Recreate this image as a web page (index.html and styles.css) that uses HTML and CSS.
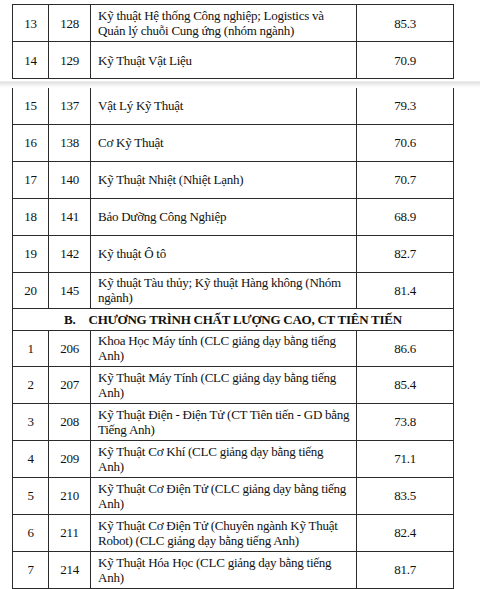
FILE: index.html
```html
<!DOCTYPE html>
<html lang="vi">
<head>
<meta charset="utf-8">
<link rel="stylesheet" href="styles.css">
</head>
<body>
<div class="page">
  <table class="grid first">
    <colgroup><col class="c1"><col class="c2"><col class="c3"><col class="c4"></colgroup>
    <tr><td class="n">13</td><td class="n">128</td><td class="t">Kỹ thuật Hệ thống Công nghiệp; Logistics và Quản lý chuỗi Cung ứng (nhóm ngành)</td><td class="n">85.3</td></tr>
    <tr><td class="n">14</td><td class="n">129</td><td class="t">Kỹ Thuật Vật Liệu</td><td class="n">70.9</td></tr>
  </table>
  <div class="sep"></div>
  <table class="grid second">
    <colgroup><col class="c1"><col class="c2"><col class="c3"><col class="c4"></colgroup>
    <tr class="top"><td class="n">15</td><td class="n">137</td><td class="t">Vật Lý Kỹ Thuật</td><td class="n">79.3</td></tr>
    <tr><td class="n">16</td><td class="n">138</td><td class="t">Cơ Kỹ Thuật</td><td class="n">70.6</td></tr>
    <tr><td class="n">17</td><td class="n">140</td><td class="t">Kỹ Thuật Nhiệt (Nhiệt Lạnh)</td><td class="n">70.7</td></tr>
    <tr><td class="n">18</td><td class="n">141</td><td class="t">Bảo Dưỡng Công Nghiệp</td><td class="n">68.9</td></tr>
    <tr><td class="n">19</td><td class="n">142</td><td class="t">Kỹ thuật Ô tô</td><td class="n">82.7</td></tr>
    <tr class="short"><td class="n">20</td><td class="n">145</td><td class="t">Kỹ thuật Tàu thủy; Kỹ thuật Hàng không (Nhóm ngành)</td><td class="n">81.4</td></tr>
    <tr class="head"><td colspan="4">B.<span class="tab"></span>CHƯƠNG TRÌNH CHẤT LƯỢNG CAO, CT TIÊN TIẾN</td></tr>
    <tr class="short"><td class="n">1</td><td class="n">206</td><td class="t">Khoa Học Máy tính (CLC giảng dạy bằng tiếng Anh)</td><td class="n">86.6</td></tr>
    <tr><td class="n">2</td><td class="n">207</td><td class="t">Kỹ Thuật Máy Tính (CLC giảng dạy bằng tiếng Anh)</td><td class="n">85.4</td></tr>
    <tr><td class="n">3</td><td class="n">208</td><td class="t">Kỹ Thuật Điện - Điện Tử (CT Tiên tiến - GD bằng Tiếng Anh)</td><td class="n">73.8</td></tr>
    <tr><td class="n">4</td><td class="n">209</td><td class="t">Kỹ Thuật Cơ Khí (CLC giảng dạy bằng tiếng<br>Anh)</td><td class="n">71.1</td></tr>
    <tr><td class="n">5</td><td class="n">210</td><td class="t">Kỹ Thuật Cơ Điện Tử (CLC giảng dạy bằng tiếng Anh)</td><td class="n">83.5</td></tr>
    <tr><td class="n">6</td><td class="n">211</td><td class="t">Kỹ Thuật Cơ Điện Tử (Chuyên ngành Kỹ Thuật Robot) (CLC giảng dạy bằng tiếng Anh)</td><td class="n">82.4</td></tr>
    <tr><td class="n">7</td><td class="n">214</td><td class="t">Kỹ Thuật Hóa Học (CLC giảng dạy bằng tiếng Anh)</td><td class="n">81.7</td></tr>
    <tr class="cut"><td class="n"></td><td class="n"></td><td class="t"></td><td class="n"></td></tr>
  </table>
</div>
</body>
</html>
```
FILE: styles.css
```css
html, body {
  margin: 0;
  padding: 0;
  background: #fff;
}
body {
  width: 480px;
  height: 589px;
  overflow: hidden;
  font-family: "Liberation Serif", "Times New Roman", serif;
  font-size: 13px;
  letter-spacing: -0.25px;
  color: #111;
}
.page {
  padding: 4px 0 0 12px;
}
.grid {
  border-collapse: collapse;
  table-layout: fixed;
  width: 441px;
}
.c1 { width: 36px; }
.c2 { width: 42px; }
.c3 { width: 266px; }
.c4 { width: 97px; }
.grid td {
  border: 1px solid #2b2b2b;
  height: 37px;
  padding: 0 6px;
  box-sizing: border-box;
  line-height: 15px;
  vertical-align: middle;
}
.grid td.n {
  text-align: center;
  padding: 0;
}
.grid td.t {
  text-align: left;
  padding: 0 4px 0 7px;
}
.second tr.top td {
  border-top: none;
  height: 36px;
}
.grid tr.short td {
  height: 36px;
}
.grid tr.head td {
  height: 22px;
  text-align: center;
  font-weight: bold;
  padding: 0;
}
.grid tr.cut td {
  height: 1px;
  line-height: 0;
  border-bottom: none;
}
.tab {
  display: inline-block;
  width: 13px;
}
.sep {
  height: 9px;
  margin-left: -12px;
  width: 480px;
  background: linear-gradient(#fff 0, #fff 2px, #dcdcdc 3px, #e6e6e6 4px, #f2f2f2 6px, #fbfbfb 8px, #fff 9px);
}
```
